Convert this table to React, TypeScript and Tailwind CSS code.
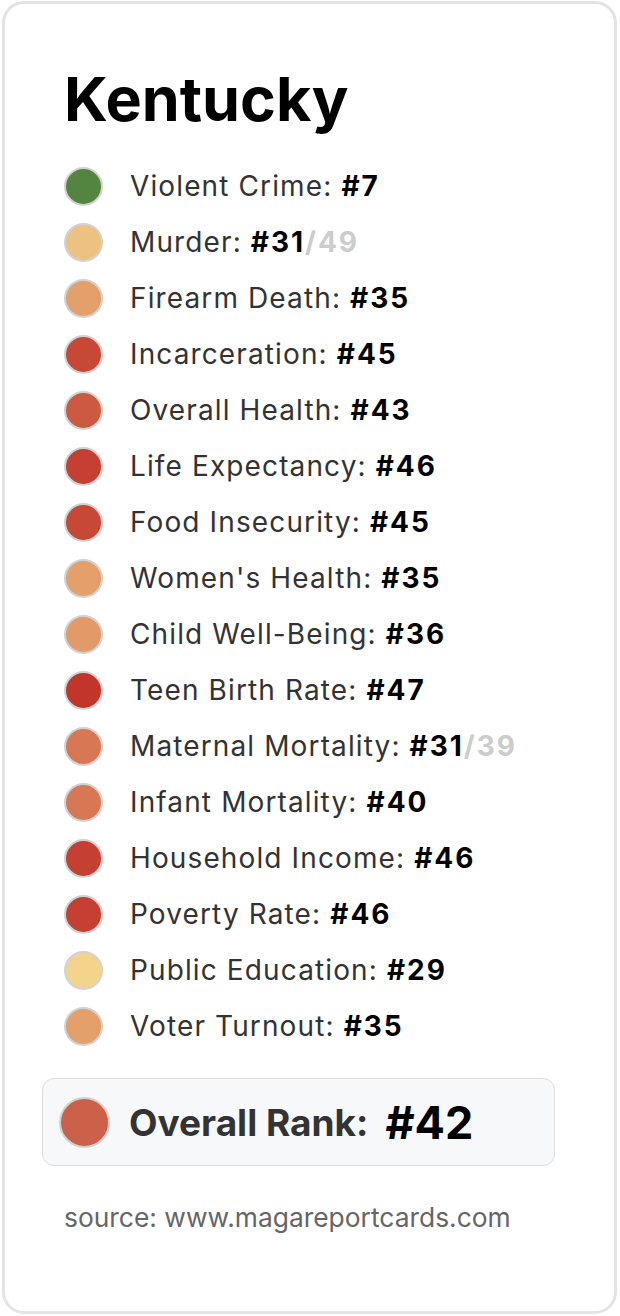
const font = { fontFamily: "Inter, 'Noto Sans', sans-serif" };

type Row = { label: string; rank: number; of?: number; color: string };

const rows: Row[] = [
  { label: "Violent Crime", rank: 7, color: "#548540" },
  { label: "Murder", rank: 31, of: 49, color: "#edc17f" },
  { label: "Firearm Death", rank: 35, color: "#e3a06b" },
  { label: "Incarceration", rank: 45, color: "#c84836" },
  { label: "Overall Health", rank: 43, color: "#cc5a40" },
  { label: "Life Expectancy", rank: 46, color: "#c53f33" },
  { label: "Food Insecurity", rank: 45, color: "#c84836" },
  { label: "Women's Health", rank: 35, color: "#e3a06b" },
  { label: "Child Well-Being", rank: 36, color: "#e39a69" },
  { label: "Teen Birth Rate", rank: 47, color: "#c1352b" },
  { label: "Maternal Mortality", rank: 31, of: 39, color: "#d77753" },
  { label: "Infant Mortality", rank: 40, color: "#d77753" },
  { label: "Household Income", rank: 46, color: "#c53f33" },
  { label: "Poverty Rate", rank: 46, color: "#c53f33" },
  { label: "Public Education", rank: 29, color: "#f4d48a" },
  { label: "Voter Turnout", rank: 35, color: "#e3a06b" },
];

function Dot({ color, size }: { color: string; size: string }) {
  return (
    <span
      className={`${size} shrink-0 rounded-full border-2 border-[#d2d2d2]`}
      style={{ backgroundColor: color }}
    />
  );
}

export default function App() {
  return (
    <div className="bg-white pl-[2px] pt-[1px]" style={font}>
      <div className="w-[615px] h-[1313px] rounded-[22px] border-[3px] border-[#e4e4e4] bg-white pl-[59px] pt-[65px]">
        <h1 className="text-[61px] leading-none font-bold text-black mb-[28px]">Kentucky</h1>

        <ul>
          {rows.map((r) => (
            <li key={r.label} className="flex h-14 items-center gap-[27px]">
              <Dot color={r.color} size="w-[39px] h-[39px]" />
              <span className="text-[28px] leading-none tracking-[0.04em] text-[#333333]">
                {r.label}: <span className="font-bold tracking-[0.07em] text-black">#{r.rank}</span>
                {r.of && <span className="font-bold tracking-[0.07em] text-[#cccccc]">/{r.of}</span>}
              </span>
            </li>
          ))}
        </ul>

        <div className="-ml-[22px] mt-6 flex h-[88px] w-[513px] items-center rounded-xl border-[1.5px] border-[#dddddd] bg-[#f7f8fa] pl-4">
          <Dot color="#cd6048" size="w-[51px] h-[51px]" />
          <span className="ml-[19px] text-[37px] leading-none font-bold text-[#333333]">Overall Rank:</span>
          <span className="ml-[17px] text-[45px] leading-none font-bold text-black">#42</span>
        </div>

        <p className="mt-[38px] text-[26.4px] leading-none text-[#666666]">source: www.magareportcards.com</p>
      </div>
    </div>
  );
}
